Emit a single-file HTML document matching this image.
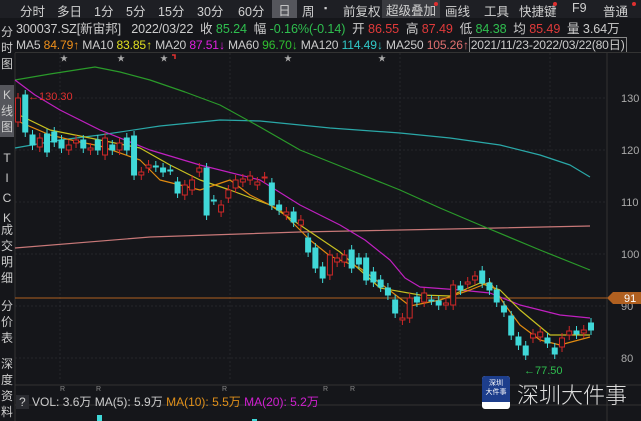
<!DOCTYPE html><html><head><meta charset="utf-8"><style>
body{margin:0;width:641px;height:421px;overflow:hidden;background:#15161a;font-family:"Liberation Sans","Noto Sans CJK SC",sans-serif;position:relative;color:#ccc}
.tabs{position:absolute;left:0;top:0;width:641px;height:18px;background:#1e1f24;font-size:12.5px}
.tabs span{position:absolute;top:1px;color:#d0d0d0}
.row{position:absolute;left:16px;font-size:12.6px;white-space:nowrap;color:#ccc;letter-spacing:-0.1px}
.side{position:absolute;left:0;width:14px;font-size:12px;color:#ccc;text-align:center;line-height:16px}
</style></head><body>
<div class="tabs">
<span style="left:20px">分时</span><span style="left:57px">多日</span><span style="left:94px">1分</span><span style="left:126px">5分</span><span style="left:158px">15分</span><span style="left:197px">30分</span><span style="left:238px">60分</span>
<span style="left:272px;top:0;width:25px;height:18px;background:#55565c;text-align:center">日</span><span style="left:302px">周</span><span style="left:324px;font-size:9px;top:3px">▪</span>
<span style="left:343px">前复权</span><span style="left:382px;top:0;height:18px;padding:0 4px;background:#3a3b40">超级叠加</span><span style="left:445px">画线</span><span style="left:484px">工具</span><span style="left:519px">快捷键</span><span style="left:572px">F9</span><span style="left:603px">普通</span>
<i style="position:absolute;left:434px;top:2px;width:4px;height:4px;border-radius:2px;background:#e03030"></i><i style="position:absolute;left:553px;top:2px;width:4px;height:4px;border-radius:2px;background:#e03030"></i><i style="position:absolute;left:632px;top:2px;width:4px;height:4px;border-radius:2px;background:#e03030"></i>
</div>
<div class="row" style="top:18px">300037.SZ[新宙邦]&nbsp;&nbsp; 2022/03/22&nbsp; 收 <span style="color:#2fbf4f">85.24</span>&nbsp; 幅 <span style="color:#2fbf4f">-0.16%(-0.14)</span>&nbsp; 开 <span style="color:#e03a3a">86.55</span>&nbsp; 高 <span style="color:#e03a3a">87.49</span>&nbsp; 低 <span style="color:#2fbf4f">84.38</span>&nbsp; 均 <span style="color:#e03a3a">85.49</span>&nbsp; 量 3.64万</div>
<div class="row" style="top:36px;font-size:12.1px;letter-spacing:-0.15px">MA5 <span style="color:#f0901a">84.79↑</span> MA10 <span style="color:#e0e020">83.85↑</span> MA20 <span style="color:#e020e0">87.51↓</span> MA60 <span style="color:#30c030">96.70↓</span> MA120 <span style="color:#30c8c8">114.49↓</span> MA250 <span style="color:#e07070">105.26↑</span><span style="border:1px solid #888;padding:0 1px">2021/11/23-2022/03/22(80日)</span></div>
<div style="position:absolute;left:15px;top:52px;width:626px;border-top:1px solid #333"></div>
<div class="side" style="top:24px">分<br>时<br>图</div>
<div class="side" style="top:85px;background:#55565c;height:50px;padding-top:2px">K<br>线<br>图</div>
<div class="side" style="top:148px;line-height:20px">T<br>I<br>C<br>K</div>
<div class="side" style="top:222px">成<br>交<br>明<br>细</div>
<div class="side" style="top:298px">分<br>价<br>表</div>
<div class="side" style="top:356px">深<br>度<br>资<br>料</div>
<svg id="c" width="641" height="421" style="position:absolute;left:0;top:0" xmlns="http://www.w3.org/2000/svg"></svg>
<div style="position:absolute;left:16px;top:393px;font-size:12px;white-space:nowrap"><span style="background:#2a2b30;padding:0 3px">?</span> VOL: 3.6万 MA(5): 5.9万 <span style="color:#e0901a">MA(10): 5.5万</span> <span style="color:#d020d0">MA(20): 5.2万</span></div>
<div style="position:absolute;left:482px;top:376px;width:28px;height:33px;background:#fff;border-radius:3px"><div style="background:#1d3e8c;height:23px;border-radius:3px 3px 0 0;color:#fff;font-size:7px;line-height:9px;text-align:center;padding-top:3px">深圳<br>大件事</div></div>
<div style="position:absolute;left:517px;top:378px;font-size:22px;color:#ddd;font-family:'Noto Sans CJK SC',sans-serif;font-weight:300">深圳大件事</div>
<script>
var s='';
function L(pts,c){s+='<polyline fill="none" stroke="'+c+'" stroke-width="1.2" stroke-linejoin="round" points="'+pts+'"/>';}
[98,150,202,254,306,358].forEach(y=>s+='<line x1="15" x2="607" y1="'+y+'" y2="'+y+'" stroke="#25262b" stroke-dasharray="2,2"/>');
[60,230,400,550].forEach(x=>s+='<line x1="'+x+'" x2="'+x+'" y1="53" y2="380" stroke="#25262b" stroke-dasharray="2,2"/>');
s+='<line x1="607" x2="607" y1="53" y2="421" stroke="#333"/>';
s+='<line x1="15" x2="15" y1="53" y2="421" stroke="#333"/>';
s+='<line x1="15" x2="641" y1="385" y2="385" stroke="#333"/><line x1="15" x2="641" y1="405" y2="405" stroke="#333"/>';
[[130,98],[120,150],[110,202],[100,254],[90,306],[80,358]].forEach(a=>s+='<text x="621" y="'+(a[1]+4)+'" fill="#aaa" font-size="11">'+a[0]+'</text>');
s+='<line x1="15" x2="607" y1="298" y2="298" stroke="#b06020" stroke-width="1"/>';
s+='<path d="M607 298 L613 292 H641 V304 H613Z" fill="#b06020"/><text x="624" y="302" fill="#fff" font-size="11">91</text>';
[60,117,160,284,378].forEach(x=>s+='<text x="'+x+'" y="61" fill="#aaa" font-size="8">★</text>');
s+='<path d="M172 55h3v4" stroke="#e03030" fill="none" stroke-width="1.5"/>';
[60,96,222,323,350].forEach(x=>s+='<text x="'+x+'" y="391" fill="#888" font-size="7">R</text>');
L('15,248 150,237 300,232 450,229 590,226','#c87878');
L('15,148 60,140 100,135 160,126 220,120 260,121 330,128 400,133 450,138 500,145 540,155 570,165 590,177','#2aa8a8');
L('15,80 50,74 95,67 120,72 150,80 185,92 220,105 260,127 300,150 350,170 400,190 440,208 480,225 540,250 590,270','#2a9a2a');
L('15,80 35,95 60,110 100,130 150,150 200,165 260,180 300,205 340,225 365,240 390,260 405,278 420,287 460,290 490,293 520,305 560,315 590,318','#c020c0');
L('15,113 50,130 100,140 140,148 170,165 200,180 230,190 270,205 300,225 340,252 380,288 420,295 450,296 480,283 500,290 520,310 550,335 590,335','#c8c020');
L('15,120 50,135 80,142 100,146 140,160 160,180 200,190 230,180 250,195 280,210 310,240 330,256 360,268 380,283 410,306 440,300 470,290 490,282 505,305 520,325 540,340 560,345 590,337','#e08a10');
var C=[[122,98],[95,132],[135,145],[147,138],[134,152],[132,142],[140,148],[150,145],[143,140],[140,148],[150,148],[140,150],[155,138],[145,150],[150,143],[138,150],[136,175],[175,172],[168,165],[166,167],[168,172],[170,170],[182,193],[195,185],[190,180],[172,168],[168,215],[200,200],[212,205],[198,190],[188,180],[182,179],[180,176],[185,182],[178,177],[183,205],[205,210],[215,212],[212,222],[225,220],[238,252],[248,268],[267,278],[275,255],[262,258],[262,255],[250,268],[258,264],[258,280],[272,282],[280,287],[288,295],[300,313],[320,318],[318,298],[297,302],[302,293],[300,300],[301,305],[305,303],[305,285],[286,290],[284,282],[280,276],[271,283],[283,290],[290,302],[306,312],[316,335],[337,345],[346,355],[338,334],[337,332],[338,343],[348,354],[347,338],[335,331],[331,334],[333,330],[323,330]];
C.forEach((c,i)=>{var x=18+i*(573/(C.length-1)),o=c[0],cl=c[1],up=cl<o,col=up?'#d02828':'#40d8d8',t=Math.min(o,cl),b=Math.max(o,cl),h=Math.max(b-t,1);
s+='<line x1="'+x+'" x2="'+x+'" y1="'+(t-5)+'" y2="'+(b+5)+'" stroke="'+col+'"/>';
s+='<rect x="'+(x-2.5)+'" y="'+t+'" width="5" height="'+h+'" fill="'+(up?'#15161a':col)+'" stroke="'+col+'" stroke-width="1"/>';});
s+='<text x="28" y="100" fill="#e03030" font-size="11">←130.30</text>';
s+='<text x="524" y="374" fill="#2fbf4f" font-size="11">←77.50</text>';
[[97,415,6],[252,419,2]].forEach(v=>s+='<rect x="'+v[0]+'" y="'+v[1]+'" width="5" height="'+v[2]+'" fill="#40d8d8"/>');
document.getElementById('c').innerHTML=s;
</script>
</body></html>
